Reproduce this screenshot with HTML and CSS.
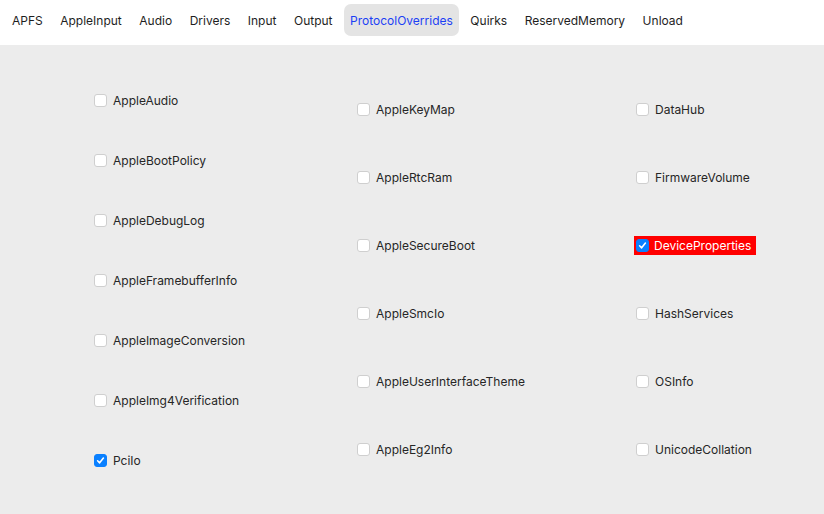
FILE: index.html
```html
<!DOCTYPE html>
<html>
<head>
<meta charset="utf-8">
<link rel="stylesheet" href="styles.css">
</head>
<body>
<div class="tabbar">
  <div class="tab">APFS</div>
  <div class="tab">AppleInput</div>
  <div class="tab">Audio</div>
  <div class="tab">Drivers</div>
  <div class="tab">Input</div>
  <div class="tab">Output</div>
  <div class="tab active">ProtocolOverrides</div>
  <div class="tab">Quirks</div>
  <div class="tab">ReservedMemory</div>
  <div class="tab">Unload</div>
</div>
<div class="content">
  <div class="col col1">
    <label class="item"><span class="box"></span>AppleAudio</label>
    <label class="item"><span class="box"></span>AppleBootPolicy</label>
    <label class="item"><span class="box"></span>AppleDebugLog</label>
    <label class="item"><span class="box"></span>AppleFramebufferInfo</label>
    <label class="item"><span class="box"></span>AppleImageConversion</label>
    <label class="item"><span class="box"></span>AppleImg4Verification</label>
    <label class="item"><span class="box checked"><svg viewBox="0 0 14 14"><path d="M3.3 7.4 L5.9 10 L10.7 3.9" fill="none" stroke="#fff" stroke-width="2" stroke-linecap="round" stroke-linejoin="round"/></svg></span>PciIo</label>
  </div>
  <div class="col col2">
    <label class="item"><span class="box"></span>AppleKeyMap</label>
    <label class="item"><span class="box"></span>AppleRtcRam</label>
    <label class="item"><span class="box"></span>AppleSecureBoot</label>
    <label class="item"><span class="box"></span>AppleSmcIo</label>
    <label class="item"><span class="box"></span>AppleUserInterfaceTheme</label>
    <label class="item"><span class="box"></span>AppleEg2Info</label>
  </div>
  <div class="col col3">
    <label class="item"><span class="box"></span>DataHub</label>
    <label class="item"><span class="box"></span>FirmwareVolume</label>
    <label class="item highlight"><span class="box checked"><svg viewBox="0 0 14 14"><path d="M3.3 7.4 L5.9 10 L10.7 3.9" fill="none" stroke="#fff" stroke-width="2" stroke-linecap="round" stroke-linejoin="round"/></svg></span>DeviceProperties</label>
    <label class="item"><span class="box"></span>HashServices</label>
    <label class="item"><span class="box"></span>OSInfo</label>
    <label class="item"><span class="box"></span>UnicodeCollation</label>
  </div>
</div>
</body>
</html>
```

FILE: styles.css
```css
* { box-sizing: border-box; }
html, body { margin: 0; padding: 0; }
body {
  width: 824px;
  height: 514px;
  overflow: hidden;
  background: #ececec;
  font-family: "Inter", "Liberation Sans", sans-serif;
  font-size: 12px;
  color: #262626;
}
.tabbar {
  height: 45px;
  background: #ffffff;
  display: flex;
  align-items: flex-start;
  padding: 4px 0 0 4px;
  gap: 1.5px;
}
.tab {
  height: 32px;
  line-height: 32px;
  padding: 1px 8px 0;
  border-radius: 7px;
  color: #1e1e1e;
  white-space: nowrap;
}
.tab.active {
  background: #e4e4e4;
  color: #1c3ff5;
  padding: 1px 6px 0;
  margin: 0 2px;
}
.content {
  display: grid;
  grid-template-columns: 263px 279px 1fr;
  padding-left: 94px;
  padding-top: 5.5px;
}
.col {
  display: flex;
  flex-direction: column;
  justify-content: space-evenly;
  align-items: flex-start;
}
.col1 { height: 460px; }
.col2, .col3 { height: 457px; }
.item {
  display: flex;
  align-items: center;
  height: 19px;
  gap: 6px;
  white-space: nowrap;
}
.box {
  width: 13px;
  height: 13px;
  border-radius: 3px;
  background: #ffffff;
  border: 1px solid #cfcfcf;
  display: inline-flex;
  align-items: center;
  justify-content: center;
}
.box.checked {
  background: #0a80ff;
  border-color: #0a80ff;
}
.box svg { width: 13px; height: 13px; }
.highlight {
  background: #ff0000;
  color: #ffffff;
  padding: 0 5px 0 2px;
  margin-left: -2px;
  gap: 5px;
}
```
